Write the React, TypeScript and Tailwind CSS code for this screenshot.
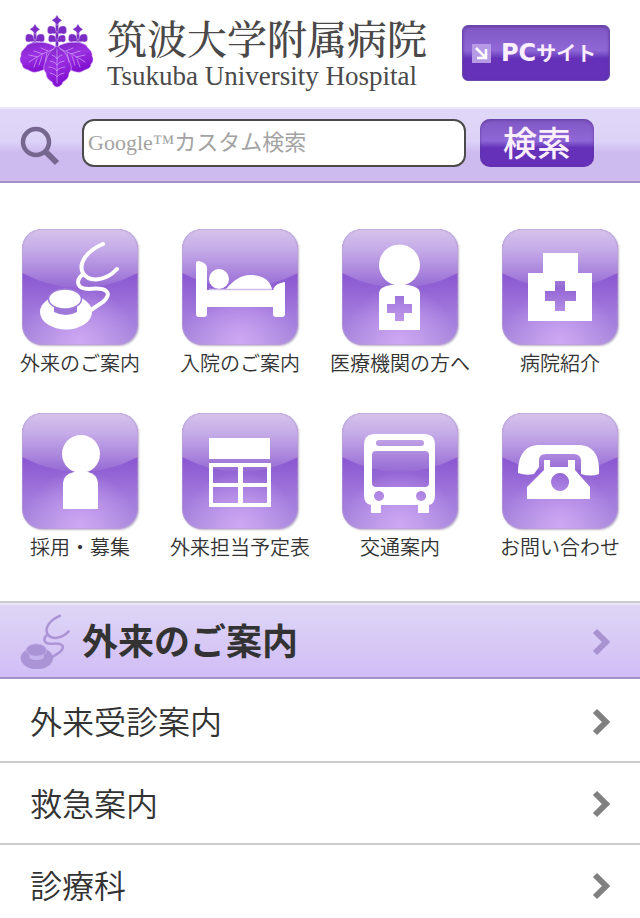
import React from "react";

const jp = "font-['Liberation_Sans','Noto_Sans_CJK_JP',sans-serif]";

function Crest() {
  const bud = <path d="M0 0q1 3 5 5.500-3 1-5 5-2-4-5-5-0-.500 0-.500Q-1 3 0 0z" />;
  const wings = (
    <path d="M-1 5.500Q-1 0-6 0-10-1-9.500 6q1 3 5 1.500 2 1 4.500-1 2.500 2 4.500 1 4 1.500 5-1.500Q10-1 6 0 1 0 1 5.500z" />
  );
  return (
    <svg viewBox="0 0 73 73" className="h-[73px] w-[73px] shrink-0" aria-hidden="true">
      <defs>
        <linearGradient id="crest" x1="0" y1="0" x2="0.4" y2="1">
          <stop offset="0" stopColor="#7d24c4" />
          <stop offset="0.5" stopColor="#9b30e2" />
          <stop offset="1" stopColor="#8210d0" />
        </linearGradient>
      </defs>
      <g fill="#7a2cc4" stroke="#e6cff8" strokeWidth="0.4">
        <path d="M35.500 8h3v24h-3zM13.500 18h3v14h-3zM56.500 18h3v14h-3z" />
        <g transform="translate(37 0)">
          {bud}
          <g transform="translate(0 11)">{wings}</g>
          <g transform="translate(0 20) scale(0.9)">{wings}</g>
        </g>
        <g transform="translate(15 9)">
          {bud}
          <g transform="translate(0 10)">{wings}</g>
          <path d="M-5 20q5-5 10 0l-1 5h-8z" />
        </g>
        <g transform="translate(58 9)">
          {bud}
          <g transform="translate(0 10)">{wings}</g>
          <path d="M-5 20q5-5 10 0l-1 5h-8z" />
        </g>
      </g>
      <g fill="url(#crest)" stroke="#dcb8f8" strokeWidth="0.6">
        <path d="M36 32C28 26 14 26 7 30c-2 4-7 6-6 11-2 3-1 6 1 8 0 5 5 5 8 7 5 3 9 0 13-1 8 0 13-10 13-23z" />
        <path d="M37 32c8-6 22-6 29-2 2 4 7 6 6 11 2 3 1 6-1 8 0 5-5 5-8 7-5 3-9 0-13-1-8 0-13-10-13-23z" />
        <path d="M37 31c-5 3-10 9-11 15-3 5-3 9 0 12 0 5 3 7 6 9 1 4 4 5 5 5s5-1 6-5c3-2 6-4 6-9 3-3 3-7 0-12-1-6-7-12-12-15z" />
      </g>
      <g fill="none" stroke="#d3a4f5" strokeWidth="0.7" strokeLinecap="round">
        <path d="M37 34v34M32 40q4 1 5 4 1-3 5-4M30 46q6 1 7 4 1-3 7-4M29 52q7 1 8 4 1-3 8-4M30 58q6 1 7 4 1-3 7-4" />
        <path d="M34 34C26 37 18 41 9 47M28 36l-7-3M23 39l-9-3M18 42l-9-2M27 38l-2 9M22 41l-3 9M17 44l-3 8" />
        <path d="M40 34c8 3 16 7 25 13M46 36l7-3M51 39l9-3M56 42l9-2M47 38l2 9M52 41l3 9M57 44l3 8" />
      </g>
    </svg>
  );
}

function Stethoscope({ gap }: { gap: string }) {
  return (
    <>
      <g fill="none" stroke="currentColor" strokeWidth="4" strokeLinecap="round">
        <path d="M81 15C64 22 56 35 61 44c6 10 23 8 34-4" />
        <path d="M61 45c-9 8-5 15 6 15 18-2 24 4 14 13L69 81" />
      </g>
      <ellipse cx="44" cy="83" rx="26" ry="17.500" fill="currentColor" />
      <path d="M32 76v7q12 6 23 0v-7z" fill={gap} />
      <ellipse cx="43" cy="70" rx="16.500" ry="10" fill="currentColor" stroke={gap} strokeWidth="1.500" />
    </>
  );
}

const glyphs: Record<string, React.ReactNode> = {
  stethoscope: <Stethoscope gap="#9d78d8" />,
  bed: (
    <g fill="currentColor">
      <path d="M14 34q0-2 3-2 8 2 8 7v22h66q2-7 12-8v32q0 3-3 3h-6q-3 0-3-3v-7H25v7q0 3-3 3h-5q-3 0-3-3z" />
      <circle cx="37" cy="50" r="10" />
      <path d="M44 60c8-9 15-14 24-14 13 0 20 5 22 14z" />
      <path d="M27 60.500h63" stroke="#cdbcea" strokeWidth="1.500" />
    </g>
  ),
  doctor: (
    <g fill="currentColor">
      <circle cx="57.500" cy="36" r="20.500" />
      <path
        fillRule="evenodd"
        d="M37 101V64q0-6 12-8h17q12 2 12 8v37zM53 67v8h-8v9h8v8h9v-8h8v-9h-8v-8z"
      />
    </g>
  ),
  hospital: (
    <path
      fill="currentColor"
      fillRule="evenodd"
      d="M41 24h35v20h14v48H26V44h15zM53 52v10h-10v10h10v10h10V72h11V62H63V52z"
    />
  ),
  person: (
    <g fill="currentColor">
      <circle cx="59" cy="41" r="19" />
      <path d="M41 96V70q1-9 11-11h14q9 2 10 11v26z" />
    </g>
  ),
  timetable: (
    <path
      fill="currentColor"
      fillRule="evenodd"
      d="M27 25h61v21H27zM27 50h62v44H27zM31 54v16h25V54zM61 54v16h24V54zM31 74v16h25V74zM61 74v16h24V74z"
    />
  ),
  bus: (
    <path
      fill="currentColor"
      fillRule="evenodd"
      d="M33 21h49q11 0 11 11v50q0 9-6 10v8H76v-8H39v8H29v-8q-7-1-7-10V32q0-11 11-11zM37 27a3 3 0 0 0 0 6h42a3 3 0 0 0 0-6zM34 38q-4 0-4 4v28q0 4 4 4h49q4 0 4-4V42q0-4-4-4zM37 78a5 5 0 1 0 .1 0zM79 78a5 5 0 1 0 .1 0z"
    />
  ),
  phone: (
    <g fill="currentColor">
      <path d="M16 60c0-18 7-28 22-28h38c15 0 22 10 21 29q-8 3-18 0V47q-1-6-7-6H44q-7 0-7 6v7l-5 7q-8 2-16-1z" />
      <path
        fillRule="evenodd"
        d="M42 47h6v7h18v-7h7v10l15 17v12H25V74l17-17zM58 60a9 9 0 1 0 .1 0z"
      />
    </g>
  ),
};

function Tile({ name }: { name: string }) {
  return (
    <svg
      viewBox="0 0 116 116"
      className="h-[116px] w-[116px] rounded-[20px] text-white shadow-[1px_1px_2px_#bdb5c8]"
      aria-hidden="true"
    >
      <defs>
        <linearGradient id="base" x1="0" y1="0" x2="0" y2="1">
          <stop offset="0.4" stopColor="#8a58d0" />
          <stop offset="0.75" stopColor="#a37bdd" />
          <stop offset="1" stopColor="#a98bdc" />
        </linearGradient>
        <radialGradient id="glow" cx="0.5" cy="1" r="0.5">
          <stop offset="0" stopColor="#d0a9f4" />
          <stop offset="1" stopColor="#d0a9f4" stopOpacity="0" />
        </radialGradient>
        <linearGradient id="gloss" x1="0" y1="0" x2="0" y2="1">
          <stop offset="0" stopColor="#d6c3ec" />
          <stop offset="0.35" stopColor="#c5abe8" />
          <stop offset="1" stopColor="#966ad5" />
        </linearGradient>
      </defs>
      <rect width="116" height="116" fill="url(#base)" />
      <rect width="116" height="116" fill="url(#glow)" />
      <path d="M0 0h116v44Q58 74 0 44z" fill="url(#gloss)" />
      <rect
        x="0.500"
        y="0.500"
        width="115"
        height="115"
        rx="20"
        fill="none"
        stroke="#b5a0d0"
        strokeOpacity="0.5"
      />
      {glyphs[name]}
    </svg>
  );
}

function Chevron() {
  return (
    <svg viewBox="0 0 18 28" className="h-7 w-[18px] shrink-0" aria-hidden="true">
      <path d="M3 3l11 11L3 25" fill="none" stroke="currentColor" strokeWidth="6" />
    </svg>
  );
}

const menu = [
  { icon: "stethoscope", label: "外来のご案内" },
  { icon: "bed", label: "入院のご案内" },
  { icon: "doctor", label: "医療機関の方へ" },
  { icon: "hospital", label: "病院紹介" },
  { icon: "person", label: "採用・募集" },
  { icon: "timetable", label: "外来担当予定表" },
  { icon: "bus", label: "交通案内" },
  { icon: "phone", label: "お問い合わせ" },
];

const links = ["外来受診案内", "救急案内", "診療科"];

export default function App() {
  return (
    <div className={`bg-white text-[#333] ${jp}`}>
      <header className="flex items-start justify-between pt-[15px] pr-[30px] pl-5">
        <a href="#top" className="flex h-[92px] gap-[14px]">
          <Crest />
          <span className="flex flex-col gap-1 whitespace-nowrap">
            <span className="font-['Noto_Serif_CJK_JP','Noto_Sans_CJK_JP',serif] text-[40px] leading-[44px] font-medium text-[#4a4848]">
              筑波大学附属病院
            </span>
            <span className="font-['Liberation_Serif',serif] text-[27px] leading-[27px] text-[#4a4a4a]">
              Tsukuba University Hospital
            </span>
          </span>
        </a>
        <a
          href="#pc"
          className="mt-[10px] flex h-14 w-[148px] shrink-0 items-center gap-[10px] rounded-md border border-[#6a48ac] bg-linear-to-b from-[#8058c4] from-0% via-[#9067d6] via-45% to-[#6431b8] to-60% pl-[9px] text-2xl font-bold whitespace-nowrap text-[#fbeeff] shadow-[inset_0_1px_3px_#5f3a9f]"
        >
          <svg viewBox="0 0 19 19" className="h-[19px] w-[19px] shrink-0" aria-hidden="true">
            <rect width="19" height="19" fill="#b79ae6" />
            <path d="M4 4l9 9M14 5v9H5" fill="none" stroke="#fff" strokeWidth="2.500" />
          </svg>
          <span className="flex items-center font-['DejaVu_Sans','Noto_Sans_CJK_JP',sans-serif]">
            PC<span className="font-['Noto_Sans_CJK_JP',sans-serif] text-xl">サイト</span>
          </span>
        </a>
      </header>

      <form
        className="flex h-[76px] items-start gap-[14px] border-t-2 border-b-2 border-t-[#efe8fc] border-b-[#a390c6] bg-linear-to-b from-[#e0d8f8] from-0% via-[#dcd2f7] via-45% to-[#cdbbf0] to-60% pt-[10px] pr-[46px] pl-5"
        onSubmit={(e) => e.preventDefault()}
      >
        <label htmlFor="query" className="flex h-12 w-12 shrink-0 items-center pt-[6px]">
          <svg viewBox="0 0 40 40" className="h-10 w-10 text-[#76678f]" role="img" aria-label="検索">
            <circle cx="16" cy="16" r="13" fill="none" stroke="currentColor" strokeWidth="4.500" />
            <path d="M26 26l11 11" stroke="currentColor" strokeWidth="6" />
          </svg>
        </label>
        <input
          id="query"
          type="text"
          placeholder="Google™カスタム検索"
          className="h-12 min-w-0 flex-1 rounded-xl border-2 border-[#4a4a4a] bg-white px-1 font-['Liberation_Serif','Noto_Sans_CJK_JP',serif] text-[22px] placeholder:text-[#a3a3a3]"
        />
        <button
          type="submit"
          className="h-12 w-[114px] shrink-0 rounded-[10px] bg-linear-to-b from-[#8058c4] from-0% via-[#9067d6] via-45% to-[#6431b8] to-60% pt-[2px] text-[34px] leading-[46px] font-medium text-[#fbeeff] shadow-[inset_0_1px_3px_#5f3a9f]"
        >
          検索
        </button>
      </form>

      <nav className="grid grid-cols-4 gap-y-[34px] pt-[46px] pb-[38px]">
        {menu.map((item) => (
          <a key={item.label} href="#menu" className="flex flex-col items-center gap-1 whitespace-nowrap">
            <Tile name={item.icon} />
            <span className="text-xl leading-[30px] font-[350]">{item.label}</span>
          </a>
        ))}
      </nav>

      <section>
        <h2 className="border-t-2 border-[#ccc]">
          <a
            href="#outpatient"
            className="flex h-[76px] items-center border-t-2 border-b-2 border-t-[#eae5f8] border-b-[#a390c6] bg-linear-to-b from-[#ded6f5] to-[#d1bdf6] pt-[2px] pr-[30px] pl-5"
          >
            <svg viewBox="17 12 80 90" className="mr-[12px] h-14 w-[50px] text-[#ab94d6]" aria-hidden="true">
              <Stethoscope gap="#c6b2ec" />
            </svg>
            <span className="flex-1 pt-[2px] text-4xl leading-10 font-bold">外来のご案内</span>
            <span className="text-[#a893d0]">
              <Chevron />
            </span>
          </a>
        </h2>
        <ul className="pt-[2px]">
          {links.map((label) => (
            <li key={label} className="border-b-2 border-[#ccc]">
              <a href="#link" className="flex h-20 items-center justify-between pt-[2px] pr-[30px] pl-[30px]">
                <span className="pt-[2px] text-[32px] leading-10 font-[350]">{label}</span>
                <span className="text-[#808080]">
                  <Chevron />
                </span>
              </a>
            </li>
          ))}
        </ul>
      </section>
    </div>
  );
}
